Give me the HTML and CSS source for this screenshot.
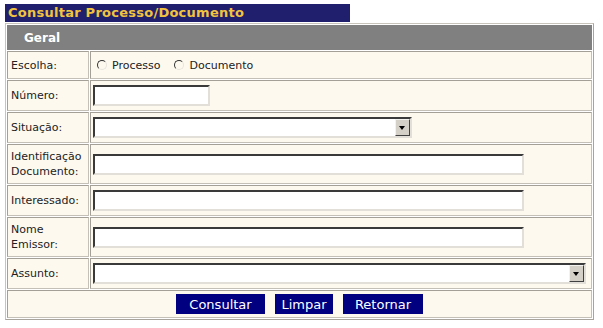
FILE: index.html
```html
<!DOCTYPE html>
<html lang="pt-BR">
<head>
    <meta charset="UTF-8">
    <title>Consultar Processo/Documento</title>
    <link rel="stylesheet" href="styles.css">
</head>
<body>
    <div class="page-title">Consultar Processo/Documento</div>
    <form id="consultaForm">
        <table class="form-table">
            <tr>
                <th colspan="2" class="section">Geral</th>
            </tr>
            <tr>
                <td class="label">Escolha:</td>
                <td class="field">
                    <div class="radios">
                        <label class="radio"><span class="radio-dot"></span>Processo</label>
                        <label class="radio"><span class="radio-dot"></span>Documento</label>
                    </div>
                </td>
            </tr>
            <tr>
                <td class="label">Número:</td>
                <td class="field"><input type="text" class="input input-short"></td>
            </tr>
            <tr>
                <td class="label">Situação:</td>
                <td class="field">
                    <div class="select select-mid">
                        <select></select>
                        <span class="select-arrow"></span>
                    </div>
                </td>
            </tr>
            <tr>
                <td class="label">Identificação<br>Documento:</td>
                <td class="field"><input type="text" class="input input-long"></td>
            </tr>
            <tr>
                <td class="label">Interessado:</td>
                <td class="field"><input type="text" class="input input-long"></td>
            </tr>
            <tr>
                <td class="label">Nome<br>Emissor:</td>
                <td class="field"><input type="text" class="input input-long"></td>
            </tr>
            <tr>
                <td class="label">Assunto:</td>
                <td class="field">
                    <div class="select select-full">
                        <select></select>
                        <span class="select-arrow"></span>
                    </div>
                </td>
            </tr>
            <tr>
                <td colspan="2" class="actions">
                    <div class="buttons">
                        <button type="submit" class="btn btn-consultar">Consultar</button>
                        <button type="reset" class="btn btn-limpar">Limpar</button>
                        <button type="button" class="btn btn-retornar">Retornar</button>
                    </div>
                </td>
            </tr>
        </table>
    </form>
</body>
</html>
```

FILE: styles.css
```css
body {
    margin: 4px 5px;
    font-family: "DejaVu Sans", Verdana, sans-serif;
    font-size: 11px;
    color: #222;
    background-color: #fff;
}
form {
    margin: 0;
}
.page-title {
    width: 345px;
    height: 18px;
    line-height: 18px;
    padding-left: 3px;
    box-sizing: border-box;
    margin-bottom: 1px;
    background-color: #1f1f6e;
    color: #f2c43e;
    font-size: 13px;
    font-weight: bold;
    letter-spacing: 0.25px;
}
.form-table {
    width: 589px;
    border-collapse: separate;
    border-spacing: 1px;
    border: 1px solid;
    border-color: #c8c4bc #a8a49c #a8a49c #c8c4bc;
}
.section {
    height: 23px;
    padding: 0 16px;
    border: 1px solid #808080;
    background-color: #808080;
    color: #fff;
    font-size: 12px;
    font-weight: bold;
    text-align: left;
}
td {
    border: 1px solid;
    border-color: #a4a098 #c4c0b8 #c4c0b8 #a4a098;
    background-color: #fdf9ef;
    vertical-align: middle;
}
.label {
    width: 74px;
    padding: 4px 3px;
    line-height: 15px;
}
.field {
    padding: 4px 2px;
}
.radios {
    display: flex;
    align-items: center;
    height: 18px;
    padding-left: 4px;
    gap: 14px;
}
.radio {
    display: flex;
    align-items: center;
    gap: 5px;
}
.radio-dot {
    width: 8px;
    height: 8px;
    border: 1px solid;
    border-color: #333 #e8e4dc #e8e4dc #333;
    border-radius: 50%;
}
.input {
    display: block;
    height: 21px;
    box-sizing: border-box;
    border: 2px solid;
    border-color: #3a3a3a #e2dfd8 #e2dfd8 #3a3a3a;
    background-color: #fff;
    font-family: inherit;
    font-size: 11px;
}
.input-short {
    width: 117px;
}
.input-long {
    width: 431px;
}
.select {
    display: flex;
    align-items: center;
    height: 21px;
    box-sizing: border-box;
    border: 2px solid;
    border-color: #3a3a3a #e2dfd8 #e2dfd8 #3a3a3a;
    background-color: #fff;
}
.select select {
    flex: 1;
    height: 100%;
    border: none;
    background: transparent;
    appearance: none;
    -webkit-appearance: none;
}
.select-mid {
    width: 319px;
}
.select-full {
    width: 493px;
}
.select-arrow {
    position: relative;
    width: 15px;
    height: 17px;
    box-sizing: border-box;
    border: 1px solid;
    border-color: #f4f2ee #404040 #404040 #f4f2ee;
    background-color: #d4d0c8;
}
.select-arrow::after {
    content: "";
    position: absolute;
    left: 3px;
    top: 6px;
    border-left: 3.5px solid transparent;
    border-right: 3.5px solid transparent;
    border-top: 4px solid #000;
}
.actions {
    padding: 3px 0;
}
.buttons {
    display: flex;
    justify-content: center;
    gap: 10px;
}
.btn {
    height: 20px;
    padding: 0;
    border: none;
    background-color: #000080;
    color: #fff;
    font-family: "DejaVu Sans", Verdana, sans-serif;
    font-size: 13px;
    cursor: pointer;
}
.btn-consultar {
    width: 89px;
}
.btn-limpar {
    width: 58px;
}
.btn-retornar {
    width: 80px;
}
```
